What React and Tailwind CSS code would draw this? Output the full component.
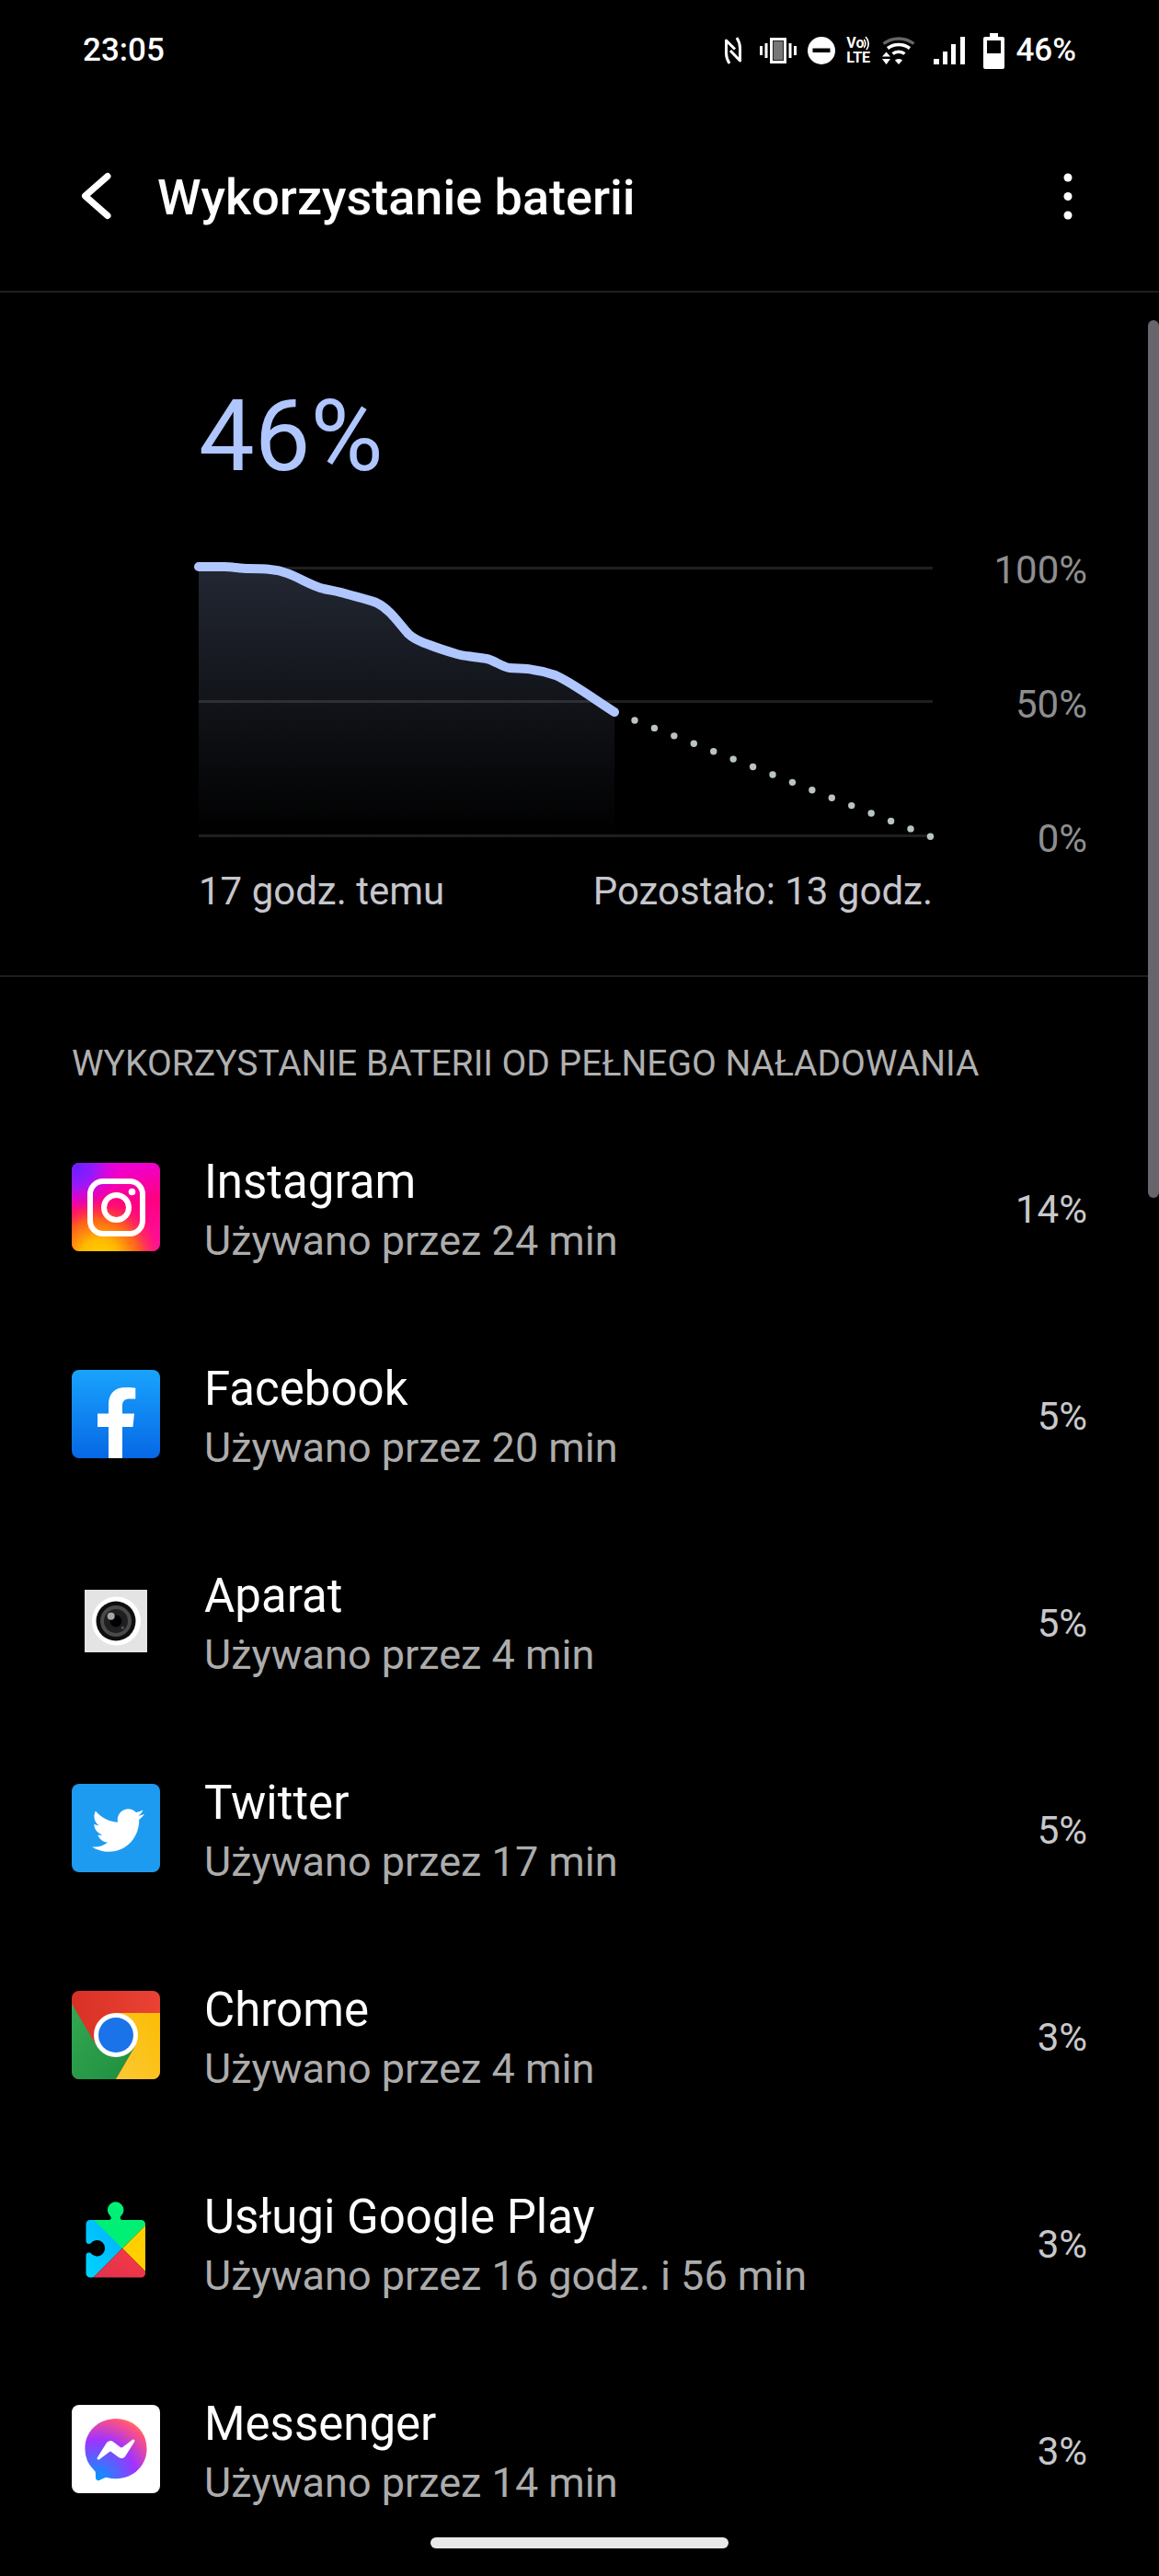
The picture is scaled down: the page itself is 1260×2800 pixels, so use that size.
import { FaTwitter } from "react-icons/fa";

// battery level samples, in the chart's own coordinates
const LEVEL_LINE =
  "M0 0C9 0 18 0 28 0C37 0 45 2 54 2C62 2 70 2 78 3C102 5 116 19 136 24C145 26 153 27 162 30C173 33 183 35 193 39C208 46 217 61 228 73C234 79 242 82 251 85C261 89 271 92 281 95C292 98 303 98 313 100C322 102 330 109 338 110C346 111 355 110 363 112C372 113 380 115 388 118C406 126 430 144 452 158";

const forecastDots = Array.from({ length: 16 }, (_, i) => ({
  x: 474 + i * 21.43,
  y: 167 + i * 8.42,
}));

function NfcIcon() {
  return (
    <svg className="w-[18px] h-[30px]" viewBox="0 0 18 30" fill="none" stroke="#fff" strokeWidth="3" strokeLinejoin="round">
      <path d="M5 29C2.500 25 1.500 22 1.500 18V4L11 13.500" />
      <path d="M13 1C15.500 5 16.500 8 16.500 12V26L6 15" />
    </svg>
  );
}

function VibrateIcon() {
  return (
    <svg className="w-10 h-[30px]" viewBox="0 0 40 30">
      <rect x="12.500" y="2.500" width="15" height="25" fill="#777" stroke="#fff" strokeWidth="3" />
      <rect x="14.500" y="4.500" width="11" height="21" fill="none" stroke="#222" strokeWidth="1" />
      <path d="M1.500 10v10M7 7v16M33 7v16M38.500 10v10" stroke="#fff" strokeWidth="3" />
    </svg>
  );
}

function DndIcon() {
  return (
    <svg className="w-[30px] h-[30px]" viewBox="0 0 30 30">
      <circle cx="15" cy="15" r="15" fill="#fff" />
      <rect x="5.500" y="12.500" width="19" height="4.500" fill="#000" />
    </svg>
  );
}

function VoLteIcon() {
  return (
    <span className="flex flex-col font-bold text-base leading-4">
      <span className="flex items-center">
        Vo
        <svg className="w-2 h-4" viewBox="0 0 8 16" fill="none" stroke="#fff" strokeWidth="1.700">
          <path d="M0 4C2.500 6 2.500 10 0 13M2 1C6 5 6 11 3 15" />
        </svg>
      </span>
      <span>LTE</span>
    </span>
  );
}

function WifiIcon() {
  return (
    <svg className="w-9 h-[30px]" viewBox="0 0 36 30" fill="none">
      <path d="M1.500 7.500C11 0 25 0 34.500 7.500" stroke="#666" strokeWidth="3.500" />
      <path d="M6 12.500C13 7 23 7 30 12.500" stroke="#fff" strokeWidth="3.500" />
      <path d="M11.500 18.500C15 15.500 21 15.500 24.500 18.500" stroke="#fff" strokeWidth="3.500" />
      <path d="M14 25.500C16 23.500 20 23.500 22 25.500L18 30z" fill="#fff" />
      <path d="M0 21.500L4.500 16.500L9 21.500zM0 24L4.500 30L9 24z" fill="#fff" />
    </svg>
  );
}

function SignalIcon() {
  return (
    <svg className="w-[34px] h-[30px]" viewBox="0 0 34 30" fill="#fff">
      <rect x="0" y="24" width="6" height="6" />
      <rect x="10" y="16" width="5" height="14" />
      <rect x="19" y="8" width="5" height="22" />
      <rect x="29" y="0" width="5" height="30" />
    </svg>
  );
}

function BatteryIcon() {
  return (
    <svg className="w-[23px] h-[39px]" viewBox="0 0 23 39">
      <path d="M7 0h9v4h5a2 2 0 0 1 2 2v31a2 2 0 0 1-2 2H2a2 2 0 0 1-2-2V6a2 2 0 0 1 2-2h5z" fill="#fff" />
      <rect x="4" y="8" width="15" height="14" fill="#000" />
    </svg>
  );
}

function InstagramIcon() {
  return (
    <svg viewBox="0 0 96 96" className="w-full h-full">
      <defs>
        <linearGradient id="ig-base" x1="0.400" y1="0" x2="0.600" y2="1">
          <stop offset="0" stopColor="#ec00e0" />
          <stop offset="0.500" stopColor="#ff0080" />
          <stop offset="1" stopColor="#ff10a0" />
        </linearGradient>
        <radialGradient id="ig-warm" gradientUnits="userSpaceOnUse" cx="30" cy="104" r="72">
          <stop offset="0" stopColor="#ffd500" />
          <stop offset="0.300" stopColor="#ffb800" />
          <stop offset="0.600" stopColor="#ff6a10" stopOpacity="0.900" />
          <stop offset="1" stopColor="#ff0070" stopOpacity="0" />
        </radialGradient>
        <radialGradient id="ig-cool" gradientUnits="userSpaceOnUse" cx="4" cy="4" r="50">
          <stop offset="0" stopColor="#6a20ff" />
          <stop offset="0.400" stopColor="#8a1cff" stopOpacity="0.900" />
          <stop offset="1" stopColor="#e000e0" stopOpacity="0" />
        </radialGradient>
      </defs>
      <rect width="96" height="96" fill="url(#ig-base)" />
      <rect width="96" height="96" fill="url(#ig-warm)" />
      <rect width="96" height="96" fill="url(#ig-cool)" />
      <g fill="none" stroke="#fff" strokeWidth="6">
        <rect x="20" y="20" width="57" height="57" rx="14" />
        <circle cx="48.500" cy="48.500" r="13.500" />
      </g>
      <circle cx="65.500" cy="31.500" r="3.800" fill="#fff" />
    </svg>
  );
}

function FacebookIcon() {
  return (
    <svg viewBox="0 0 96 96" className="w-full h-full">
      <defs>
        <linearGradient id="fb-bg" x1="0" y1="0" x2="0" y2="1">
          <stop offset="0" stopColor="#19a3fc" />
          <stop offset="1" stopColor="#0668e6" />
        </linearGradient>
      </defs>
      <rect width="96" height="96" fill="url(#fb-bg)" />
      <path
        d="M40 96V62H28V47.500H40V38C40 25 47 19 59 19C63.500 19 67 19.300 69.300 19.800V31.500H63C57 31.500 55 34.500 55 39V47.500H68L66.500 62H55V96z"
        fill="#fff"
      />
    </svg>
  );
}

function CameraIcon() {
  return (
    <svg viewBox="0 0 96 96" className="w-full h-full">
      <rect x="14" y="14" width="68" height="68" fill="#e4e4e4" />
      <circle cx="48.500" cy="48" r="26.500" fill="#fff" />
      <circle cx="48" cy="48" r="21.500" fill="#0e0e0e" />
      <circle cx="48" cy="48" r="17" fill="#4a4a4a" />
      <circle cx="48" cy="48" r="13" fill="#1f1f21" />
      <circle cx="48" cy="48" r="6.500" fill="#000" />
      <circle cx="42.700" cy="42.700" r="4" fill="#a6a6a6" />
      <circle cx="55.300" cy="55.300" r="1.500" fill="#555" />
    </svg>
  );
}

function TwitterIcon() {
  return (
    <span className="flex w-full h-full items-center justify-center bg-[#1d9bf0] pl-1 pt-1">
      <FaTwitter className="w-[57px] h-[57px] text-white" />
    </span>
  );
}

function ChromeIcon() {
  return (
    <svg viewBox="0 0 96 96" className="w-full h-full">
      <defs>
        <linearGradient id="cr-red" x1="0" y1="0" x2="1" y2="0">
          <stop offset="0" stopColor="#d93025" />
          <stop offset="1" stopColor="#ea4335" />
        </linearGradient>
        <linearGradient id="cr-green" x1="0" y1="0" x2="1" y2="1">
          <stop offset="0" stopColor="#34a853" />
          <stop offset="1" stopColor="#1e8e3e" />
        </linearGradient>
        <linearGradient id="cr-yellow" x1="1" y1="0" x2="0" y2="1">
          <stop offset="0" stopColor="#fbbc04" />
          <stop offset="1" stopColor="#fcc934" />
        </linearGradient>
      </defs>
      <rect width="96" height="96" fill="url(#cr-red)" />
      <path d="M0 14L27 60L69 60L48 96H0z" fill="url(#cr-green)" />
      <path d="M48 24H96V96H48L69 60z" fill="url(#cr-yellow)" />
      <circle cx="48" cy="48" r="24" fill="#fff" />
      <circle cx="48" cy="48" r="19" fill="#1a73e8" />
    </svg>
  );
}

function PlayServicesIcon() {
  return (
    <svg viewBox="0 0 96 96" className="w-full h-full">
      <defs>
        <clipPath id="gp-shape">
          <path d="M20 24H40.500C42.500 24 43.500 22 42.200 20A8.800 8.800 0 1 1 53.200 20C52 22 53 24 55 24H75.500A4.500 4.500 0 0 1 80 28.500V82A4.500 4.500 0 0 1 75.500 86.500H20A4.500 4.500 0 0 1 15.500 82V62.500C15.500 60 18 59 20.500 60A8.700 8.700 0 1 0 20.500 49.500C18 50.500 15.500 49.500 15.500 47V28.500A4.500 4.500 0 0 1 20 24z" />
        </clipPath>
        <linearGradient id="gp-blue" x1="1" y1="0" x2="0" y2="1">
          <stop offset="0" stopColor="#00a8ff" />
          <stop offset="1" stopColor="#00e0ff" />
        </linearGradient>
        <linearGradient id="gp-red" x1="1" y1="0" x2="0" y2="1">
          <stop offset="0" stopColor="#ff3a44" />
          <stop offset="1" stopColor="#d6304f" />
        </linearGradient>
      </defs>
      <g clipPath="url(#gp-shape)">
        <path d="M0 0H24L55 55L24 86L0 96z" fill="url(#gp-blue)" />
        <path d="M0 0H96V14L55 55z" fill="#00f076" />
        <path d="M96 14V96L55 55z" fill="#ffcf00" />
        <path d="M14 96L55 55L96 96z" fill="url(#gp-red)" />
      </g>
    </svg>
  );
}

function MessengerIcon() {
  return (
    <svg viewBox="0 0 96 96" className="w-full h-full">
      <defs>
        <radialGradient id="ms-bg" cx="0.190" cy="0.990" r="1.090">
          <stop offset="0" stopColor="#0099ff" />
          <stop offset="0.600" stopColor="#a033ff" />
          <stop offset="0.930" stopColor="#ff5280" />
          <stop offset="1" stopColor="#ff7061" />
        </radialGradient>
      </defs>
      <rect width="96" height="96" fill="#fff" />
      <path
        transform="translate(14.400 15) scale(2.800)"
        fill="url(#ms-bg)"
        d="M.001 11.639C.001 4.949 5.241 0 12.001 0S24 4.950 24 11.639c0 6.689-5.240 11.638-12 11.638-1.210 0-2.380-.16-3.470-.46a.96.96 0 00-.64.05l-2.390 1.050a.96.96 0 01-1.350-.85l-.07-2.140a.97.97 0 00-.32-.68A11.390 11.389 0 01.002 11.640zm8.320-2.190l-3.520 5.600c-.35.53.32 1.139.82.75l3.790-2.870c.26-.2.6-.2.87 0l2.800 2.100c.84.63 2.040.4 2.600-.48l3.520-5.600c.35-.53-.32-1.130-.82-.75l-3.790 2.870c-.25.2-.6.2-.86 0l-2.800-2.100a1.800 1.800 0 00-2.610.48z"
      />
    </svg>
  );
}

const apps = [
  { name: "Instagram", used: "24 min", percent: 14, Icon: InstagramIcon },
  { name: "Facebook", used: "20 min", percent: 5, Icon: FacebookIcon },
  { name: "Aparat", used: "4 min", percent: 5, Icon: CameraIcon },
  { name: "Twitter", used: "17 min", percent: 5, Icon: TwitterIcon },
  { name: "Chrome", used: "4 min", percent: 3, Icon: ChromeIcon },
  { name: "Usługi Google Play", used: "16 godz. i 56 min", percent: 3, Icon: PlayServicesIcon },
  { name: "Messenger", used: "14 min", percent: 3, Icon: MessengerIcon },
];

function StatusBar() {
  return (
    <div className="flex items-center justify-between py-[34px] px-[90px] text-[35px] leading-[42px] font-medium">
      <span>23:05</span>
      <div className="flex items-center gap-3">
        <div className="flex items-center gap-5">
          <NfcIcon />
          <div className="flex items-center gap-3">
            <VibrateIcon />
            <DndIcon />
            <VoLteIcon />
            <WifiIcon />
          </div>
          <SignalIcon />
          <BatteryIcon />
        </div>
        <span>46%</span>
      </div>
    </div>
  );
}

function BatteryChart() {
  return (
    <svg viewBox="0 0 798 294" className="block w-full overflow-visible">
      <defs>
        <linearGradient id="level-fill" x1="0" y1="0" x2="0" y2="1">
          <stop offset="0" stopColor="#b0c6ff" stopOpacity="0.200" />
          <stop offset="1" stopColor="#b0c6ff" stopOpacity="0" />
        </linearGradient>
      </defs>
      <path d={`${LEVEL_LINE}V292H0z`} fill="url(#level-fill)" />
      <path d="M0 1.500H798M0 146.500H798M0 292.500H798" stroke="#fff" strokeOpacity="0.120" strokeWidth="3" />
      <path d={LEVEL_LINE} fill="none" stroke="#b0c6ff" strokeWidth="10" strokeLinecap="round" strokeLinejoin="round" />
      {forecastDots.map((dot, i) => (
        <circle key={i} cx={dot.x} cy={dot.y} r="3.700" fill="#bac3c6" />
      ))}
    </svg>
  );
}

export default function App() {
  return (
    <div className="relative min-h-screen bg-black text-white font-['Roboto',sans-serif]">
      <StatusBar />

      {/* Header */}
      <header className="flex items-center justify-between py-[69px] pl-[87px] pr-[89px] border-b-2 border-[#1e1e1e]">
        <div className="flex items-center gap-12">
          <button aria-label="Wstecz">
            <svg className="w-9 h-[52px]" viewBox="0 0 36 52" fill="none" stroke="#fff" strokeWidth="7" strokeLinecap="round" strokeLinejoin="round">
              <path d="M30 4.500L5.500 26L30 47.500" />
            </svg>
          </button>
          <h1 className="pt-1 text-[54px] leading-[64px] font-medium">Wykorzystanie baterii</h1>
        </div>
        <button aria-label="Więcej opcji">
          <svg className="w-5 h-[52px]" viewBox="0 0 20 52" fill="#fff">
            <circle cx="10" cy="6" r="4.500" />
            <circle cx="10" cy="26.500" r="4.500" />
            <circle cx="10" cy="47" r="4.500" />
          </svg>
        </button>
      </header>

      {/* Level chart */}
      <section className="pt-[92px] pb-[67px] pl-[216px] pr-[78px] border-b-2 border-[#1e1e1e]">
        <p className="text-[108px] leading-[128px] text-[#b0c6ff]">46%</p>
        <div className="mt-[58px] flex text-[42px] leading-[48px]">
          <div className="flex-1 pt-5 pb-[26px]">
            <BatteryChart />
          </div>
          <div className="w-[168px] flex flex-col justify-between text-right text-[#8e8e90]">
            <span>100%</span>
            <span>50%</span>
            <span>0%</span>
          </div>
        </div>
        <div className="mt-[9px] mr-[168px] flex justify-between text-[42px] leading-[48px] text-[#c6c6cc]">
          <span>17 godz. temu</span>
          <span>Pozostało: 13 godz.</span>
        </div>
      </section>

      {/* App list */}
      <section className="px-[78px]">
        <h2 className="pt-[70px] pb-[73px] text-[39px] leading-[48px] text-[#b0b0b0]">
          WYKORZYSTANIE BATERII OD PEŁNEGO NAŁADOWANIA
        </h2>
        <ul className="flex flex-col gap-[101px]">
          {apps.map(({ name, used, percent, Icon }) => (
            <li key={name} className="flex items-center gap-12">
              <div className="w-24 h-24 mb-[6px] shrink-0 rounded-lg overflow-hidden">
                <Icon />
              </div>
              <div className="flex-1 flex flex-col gap-1">
                <span className="text-[51px] leading-[64px]">{name}</span>
                <span className="text-[45px] leading-[56px] text-[#acacac]">Używano przez {used}</span>
              </div>
              <span className="text-[42px] leading-[48px] text-[#c8c8cc]">{percent}%</span>
            </li>
          ))}
        </ul>
      </section>

      {/* Gesture bar */}
      <div className="flex justify-center pt-[31px] pb-[30px]">
        <div className="w-[324px] h-3 rounded-full bg-[#e9e9e9]" />
      </div>

      {/* Scroll thumb */}
      <div className="absolute right-0 top-[348px] w-3 h-[954px] rounded-full bg-[#67656b]" />
    </div>
  );
}
